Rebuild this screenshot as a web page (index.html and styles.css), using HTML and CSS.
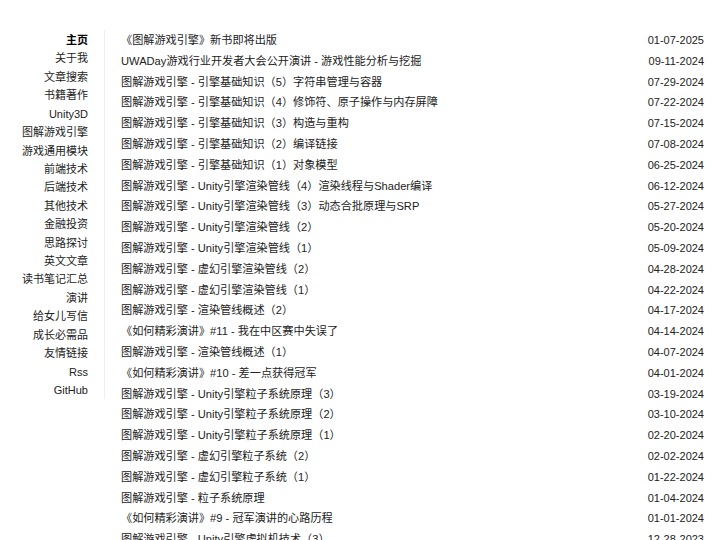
FILE: index.html
```html
<!DOCTYPE html>
<html lang="zh-CN">
<head>
<meta charset="utf-8">
<title>Blog</title>
<link rel="stylesheet" href="styles.css">
</head>
<body>
<div class="page">
  <nav class="sidebar">
    <a class="nav-item active" href="#">主页</a>
    <a class="nav-item" href="#">关于我</a>
    <a class="nav-item" href="#">文章搜索</a>
    <a class="nav-item" href="#">书籍著作</a>
    <a class="nav-item" href="#">Unity3D</a>
    <a class="nav-item" href="#">图解游戏引擎</a>
    <a class="nav-item" href="#">游戏通用模块</a>
    <a class="nav-item" href="#">前端技术</a>
    <a class="nav-item" href="#">后端技术</a>
    <a class="nav-item" href="#">其他技术</a>
    <a class="nav-item" href="#">金融投资</a>
    <a class="nav-item" href="#">思路探讨</a>
    <a class="nav-item" href="#">英文文章</a>
    <a class="nav-item" href="#">读书笔记汇总</a>
    <a class="nav-item" href="#">演讲</a>
    <a class="nav-item" href="#">给女儿写信</a>
    <a class="nav-item" href="#">成长必需品</a>
    <a class="nav-item" href="#">友情链接</a>
    <a class="nav-item" href="#">Rss</a>
    <a class="nav-item" href="#">GitHub</a>
  </nav>
  <main class="posts">
    <div class="post"><a href="#">《图解游戏引擎》新书即将出版</a><span class="date">01-07-2025</span></div>
    <div class="post"><a href="#">UWADay游戏行业开发者大会公开演讲 - 游戏性能分析与挖掘</a><span class="date">09-11-2024</span></div>
    <div class="post"><a href="#">图解游戏引擎 - 引擎基础知识（5）字符串管理与容器</a><span class="date">07-29-2024</span></div>
    <div class="post"><a href="#">图解游戏引擎 - 引擎基础知识（4）修饰符、原子操作与内存屏障</a><span class="date">07-22-2024</span></div>
    <div class="post"><a href="#">图解游戏引擎 - 引擎基础知识（3）构造与重构</a><span class="date">07-15-2024</span></div>
    <div class="post"><a href="#">图解游戏引擎 - 引擎基础知识（2）编译链接</a><span class="date">07-08-2024</span></div>
    <div class="post"><a href="#">图解游戏引擎 - 引擎基础知识（1）对象模型</a><span class="date">06-25-2024</span></div>
    <div class="post"><a href="#">图解游戏引擎 - Unity引擎渲染管线（4）渲染线程与Shader编译</a><span class="date">06-12-2024</span></div>
    <div class="post"><a href="#">图解游戏引擎 - Unity引擎渲染管线（3）动态合批原理与SRP</a><span class="date">05-27-2024</span></div>
    <div class="post"><a href="#">图解游戏引擎 - Unity引擎渲染管线（2）</a><span class="date">05-20-2024</span></div>
    <div class="post"><a href="#">图解游戏引擎 - Unity引擎渲染管线（1）</a><span class="date">05-09-2024</span></div>
    <div class="post"><a href="#">图解游戏引擎 - 虚幻引擎渲染管线（2）</a><span class="date">04-28-2024</span></div>
    <div class="post"><a href="#">图解游戏引擎 - 虚幻引擎渲染管线（1）</a><span class="date">04-22-2024</span></div>
    <div class="post"><a href="#">图解游戏引擎 - 渲染管线概述（2）</a><span class="date">04-17-2024</span></div>
    <div class="post"><a href="#">《如何精彩演讲》#11 - 我在中区赛中失误了</a><span class="date">04-14-2024</span></div>
    <div class="post"><a href="#">图解游戏引擎 - 渲染管线概述（1）</a><span class="date">04-07-2024</span></div>
    <div class="post"><a href="#">《如何精彩演讲》#10 - 差一点获得冠军</a><span class="date">04-01-2024</span></div>
    <div class="post"><a href="#">图解游戏引擎 - Unity引擎粒子系统原理（3）</a><span class="date">03-19-2024</span></div>
    <div class="post"><a href="#">图解游戏引擎 - Unity引擎粒子系统原理（2）</a><span class="date">03-10-2024</span></div>
    <div class="post"><a href="#">图解游戏引擎 - Unity引擎粒子系统原理（1）</a><span class="date">02-20-2024</span></div>
    <div class="post"><a href="#">图解游戏引擎 - 虚幻引擎粒子系统（2）</a><span class="date">02-02-2024</span></div>
    <div class="post"><a href="#">图解游戏引擎 - 虚幻引擎粒子系统（1）</a><span class="date">01-22-2024</span></div>
    <div class="post"><a href="#">图解游戏引擎 - 粒子系统原理</a><span class="date">01-04-2024</span></div>
    <div class="post"><a href="#">《如何精彩演讲》#9 - 冠军演讲的心路历程</a><span class="date">01-01-2024</span></div>
    <div class="post"><a href="#">图解游戏引擎 - Unity引擎虚拟机技术（3）</a><span class="date">12-28-2023</span></div>
    <div class="post"><a href="#">图解游戏引擎 - Unity引擎虚拟机技术（2）</a><span class="date">12-20-2023</span></div>
  </main>
</div>
</body>
</html>
```

FILE: styles.css
```css
html, body {
  margin: 0;
  padding: 0;
  background: #fff;
}
body {
  font-family: "Liberation Sans", "Noto Sans CJK SC", sans-serif;
  font-size: 11px;
  color: #222;
  overflow: hidden;
}
a {
  color: #222;
  text-decoration: none;
}
.page {
  display: flex;
  align-items: flex-start;
  padding-top: 30px;
}
.sidebar {
  display: flex;
  flex-direction: column;
  align-items: flex-end;
  width: 88px;
  padding-right: 16px;
  padding-top: 1px;
  border-right: 1px solid #eee;
}
.nav-item {
  line-height: 18.42px;
  color: #222;
}
.nav-item.active {
  font-weight: bold;
  color: #000;
}
.posts {
  flex: 1;
  padding: 0 16px;
}
.post {
  display: flex;
  justify-content: space-between;
  line-height: 20.8px;
}
.post a {
  font-size: 11.15px;
}
.date {
  color: #222;
}
```
